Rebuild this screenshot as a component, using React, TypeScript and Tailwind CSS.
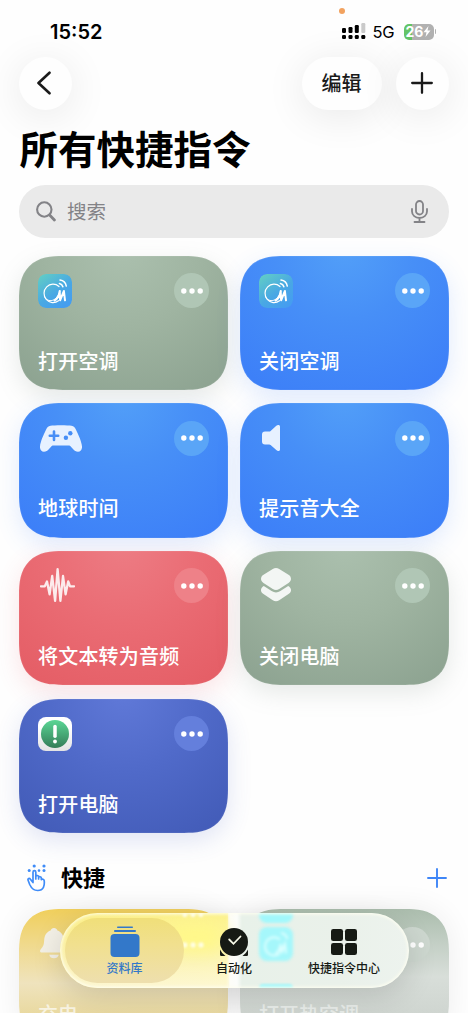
import React from 'react';

type Tone = 'sage' | 'blue' | 'red' | 'indigo';

interface Shortcut {
  title: string;
  tone: Tone;
  icon: React.ReactNode;
}

const toneStyles: Record<Tone, string> = {
  sage: 'bg-[radial-gradient(circle_at_50%_-5%,#abc0ae_0%,#9fb4a1_45%,#8ba18f_100%)] shadow-[0_8px_24px_rgba(120,140,125,0.18),inset_0_0_1px_0.5px_rgba(255,255,255,0.12)]',
  blue: 'bg-[radial-gradient(circle_at_50%_-5%,#529ff8_0%,#478ff7_40%,#3b7df8_100%)] shadow-[0_8px_24px_rgba(70,130,250,0.16),inset_0_0_1px_0.5px_rgba(255,255,255,0.12)]',
  red: 'bg-[radial-gradient(circle_at_50%_-5%,#ed7c84_0%,#ea6c74_45%,#e45c64_100%)] shadow-[0_8px_24px_rgba(230,90,100,0.16),inset_0_0_1px_0.5px_rgba(255,255,255,0.12)]',
  indigo: 'bg-[radial-gradient(circle_at_50%_-5%,#6079d8_0%,#506ac9_45%,#415ab6_100%)] shadow-[0_8px_24px_rgba(70,95,190,0.16),inset_0_0_1px_0.5px_rgba(255,255,255,0.12)]',
};

const dotStyles: Record<Tone, string> = {
  sage: 'bg-[#b0c6b5]',
  blue: 'bg-[#5aa5f7]',
  red: 'bg-[#ee8188]',
  indigo: 'bg-[#647fdc]',
};

// continuous corners where the browser knows them, plain radius otherwise
const cardShape =
  'rounded-[34px] supports-[corner-shape:squircle]:rounded-[44px] supports-[corner-shape:squircle]:[corner-shape:superellipse(1.4)]';

const MideaIcon = () => (
  <svg viewBox="0 0 34 34" className="size-[34px] rounded-[8px]">
    <defs>
      <linearGradient id="midea" x1="0" y1="0" x2="0.75" y2="1">
        <stop offset="0" stopColor="#63d0c3" />
        <stop offset="0.6" stopColor="#49a8e4" />
        <stop offset="1" stopColor="#459df0" />
      </linearGradient>
    </defs>
    <rect width="34" height="34" rx="8" fill="url(#midea)" />
    <g fill="none" stroke="#fff" strokeLinecap="round">
      <path d="M21 12.500a9 9.200 0 1 0-.5 14.200" strokeWidth="1.200" />
      <path d="M7 24c5 5.500 12 2.500 15-7" strokeWidth="1" />
      <path d="M16.500 26.500c2.800-1.500 4.600-5 5.200-9.500l.4 9.300 3.800-9.300 1.100 9.300" strokeWidth="2" strokeLinejoin="round" />
      <path d="M21.400 9.600a4.500 4.500 0 0 1 3.500 3.200M22 6.100a7.500 7.500 0 0 1 6.300 6" strokeWidth="1.500" />
    </g>
  </svg>
);

const GamepadIcon = () => (
  <svg viewBox="0 0 42 27" className="size-full">
    <path
      fill="#e7f1ff"
      d="M10.500.8C14 0 28 0 31.500.8c2.300.5 3.400 1.600 4.600 4.300C38.500 10 41.700 17 42 21.500c.2 3.200-1.400 5.200-4 5.200-2 0-3.500-.8-5-2.700l-2.300-2.600c-.6-.7-1-.8-2-.8H13.300c-1 0-1.400.1-2 .8L9 24c-1.500 1.900-3 2.700-5 2.700-2.600 0-4.200-2-4-5.200C.3 17 3.500 10 5.900 5.100 7.100 2.400 8.200 1.300 10.500.8Z"
    />
    <path d="M14 6.500v8.400M9.800 10.700h8.400" stroke="#478ef6" strokeWidth="2.600" strokeLinecap="round" />
    <circle cx="30.300" cy="8.300" r="2.200" fill="#478ef6" />
    <circle cx="25.900" cy="12.700" r="2.200" fill="#478ef6" />
  </svg>
);

const SpeakerIcon = () => (
  <svg viewBox="0 0 18 26" className="size-full">
    <path
      fill="#e7f1ff"
      d="M3 6.600h4.200c.6 0 1-.2 1.400-.6L14.300.800C15.200 0 16 0 16.800.1c.8.200 1.200.700 1.200 1.500v22.800c0 .8-.4 1.400-1.200 1.500-.8.100-1.600 0-2.500-.8L8.600 20c-.4-.4-.8-.6-1.400-.6H3c-2 0-3-1-3-3V9.600c0-2 1-3 3-3Z"
    />
  </svg>
);

const WaveIcon = () => (
  <svg viewBox="0 0 35 34" className="size-full">
    <path
      d="M1 18.300h3.800L7 13.500l2.600 12.800L12.200 8l2.900 24.800L17.600 1.200l2.800 31.600L23 8l2.600 18.300 2.600-12.800 1.900 4.800H34"
      fill="none"
      stroke="#fcebec"
      strokeWidth="2.300"
      strokeLinecap="round"
      strokeLinejoin="round"
    />
  </svg>
);

const LayersIcon = () => (
  <svg viewBox="0 0 30 34" className="size-full">
    <path
      fill="#f3f6f4"
      d="M11.800 1.100c2.200-1.400 4.200-1.400 6.400 0l9.300 5.600c3.300 2.100 3.300 6.100 0 8.200l-9.300 6c-2.200 1.400-4.200 1.400-6.400 0l-9.300-6c-3.300-2.100-3.300-6.100 0-8.200Z"
    />
    <path
      fill="#f3f6f4"
      d="M2.800 18l7.800 5c3 1.900 5.800 1.900 8.800 0l7.800-5c3.600 2.100 3.800 6 .3 8.100l-9.300 6.200c-2.200 1.400-4.200 1.400-6.400 0l-9.300-6.200c-3.500-2.100-3.300-6 .3-8.100Z"
    />
  </svg>
);

const AlertIcon = () => (
  <svg viewBox="0 0 34 34" className="size-[34px]">
    <defs>
      <linearGradient id="alert" x1="0" y1="0" x2="0" y2="1">
        <stop offset="0" stopColor="#5bd695" />
        <stop offset="1" stopColor="#347d58" />
      </linearGradient>
      <linearGradient id="alertBg" x1="0" y1="0" x2="0" y2="1">
        <stop offset="0.300" stopColor="#fff" />
        <stop offset="1" stopColor="#e3e3e3" />
      </linearGradient>
    </defs>
    <rect width="34" height="34" rx="8" fill="url(#alertBg)" />
    <circle cx="17" cy="17" r="14" fill="url(#alert)" />
    <path d="M17 9.600v9.600" stroke="#fff" strokeWidth="3.500" strokeLinecap="round" />
    <circle cx="17" cy="24.500" r="1.900" fill="#fff" />
  </svg>
);

const BellIcon = () => (
  <svg viewBox="0 0 28 31" className="size-full" fill="#f3f0e6">
    <path d="M14 0c1.700 0 3 1 3.400 2.600C21.500 4 23.500 7.500 23.800 12c.3 5 1 6.500 3.200 9 1.800 2 .9 3.600-1 3.600H2c-1.900 0-2.800-1.600-1-3.600 2.200-2.500 2.900-4 3.200-9 .3-4.500 2.300-8 6.400-9.400C11 1 12.300 0 14 0Z" />
    <path d="M9.200 26.700h9.600c-.6 2.300-2.300 3.600-4.800 3.600s-4.200-1.300-4.800-3.600Z" />
  </svg>
);

const TapIcon = () => (
  <svg viewBox="0 0 20 28" className="h-[28px] w-[20px]">
    <g fill="#3f8cf8">
      <circle cx="7.200" cy="2" r="1.600" />
      <circle cx="17" cy="2" r="1.600" />
      <circle cx="2.200" cy="6.600" r="1.500" />
      <circle cx="12" cy="6.600" r="1.300" />
      <circle cx="17" cy="6.600" r="1.500" />
    </g>
    <path
      d="M6 18.500V8.200c0-2 2.800-2 2.800 0V15v-2.700c.7-1.200 2.500-1 2.800.4V15v-1.700c.8-1 2.400-.7 2.700.5v1.800c.9-1 2.700-.4 2.900 1.100.5 4.800-.4 9.800-6.500 9.800-4.600 0-6.400-2.500-8-6L1.100 16.200c-.6-1.700 1.300-2.500 2.300-1L6 18.500Z"
      fill="none"
      stroke="#3f8cf8"
      strokeWidth="1.700"
      strokeLinejoin="round"
      strokeLinecap="round"
    />
  </svg>
);

const MoreButton: React.FC<{ className: string }> = ({ className }) => (
  <button className={`flex size-[35px] items-center justify-center rounded-full ${className}`}>
    <svg viewBox="0 0 22 6" className="h-[6px] w-[22px]" fill="#fff">
      <circle cx="2.800" cy="3" r="2.700" />
      <circle cx="11" cy="3" r="2.700" />
      <circle cx="19.200" cy="3" r="2.700" />
    </svg>
  </button>
);

const ShortcutCard: React.FC<{ shortcut: Shortcut }> = ({ shortcut }) => (
  <div className={`flex h-[134.500px] flex-col justify-between pt-[17.500px] pr-[19px] pb-[14.500px] pl-[19px] ${cardShape} ${toneStyles[shortcut.tone]}`}>
    <div className="flex items-start justify-between">
      {shortcut.icon}
      <MoreButton className={dotStyles[shortcut.tone]} />
    </div>
    <p className="text-[20px] leading-[30px] font-medium tracking-[0.200px] text-white">{shortcut.title}</p>
  </div>
);

const shortcuts: Shortcut[] = [
  { title: '打开空调', tone: 'sage', icon: <div className="pt-[1px]"><MideaIcon /></div> },
  { title: '关闭空调', tone: 'blue', icon: <div className="pt-[1px]"><MideaIcon /></div> },
  { title: '地球时间', tone: 'blue', icon: <div className="mt-[4px] ml-[2px] h-[27px] w-[42px]"><GamepadIcon /></div> },
  { title: '提示音大全', tone: 'blue', icon: <div className="mt-[4px] ml-[3px] h-[26px] w-[18px]"><SpeakerIcon /></div> },
  { title: '将文本转为音频', tone: 'red', icon: <div className="ml-[2px] h-[34px] w-[35px]"><WaveIcon /></div> },
  { title: '关闭电脑', tone: 'sage', icon: <div className="ml-[2px] h-[34px] w-[30px]"><LayersIcon /></div> },
  { title: '打开电脑', tone: 'indigo', icon: <div className="pt-[1px]"><AlertIcon /></div> },
];

const StatusBar = () => (
  <div className="flex h-[57px] items-start justify-between pt-[20px] pr-[32px] pl-[50px]">
    <span className="pt-[1px] font-[Inter] text-[20px] leading-[23px] font-semibold">15:52</span>
    <div className="flex h-[23px] items-center">
      <svg viewBox="0 0 24 17" className="h-[17px] w-[24px]">
        <rect x="0" y="5" width="4" height="5" rx="1.200" />
        <rect x="6.500" y="4" width="4" height="6" rx="1.200" />
        <rect x="12.800" y="2" width="4" height="8" rx="1.200" />
        <rect x="19.300" y="0" width="4" height="10" rx="1.200" fill="#cacaca" />
        <rect x="0" y="12" width="4" height="4" rx="1.300" />
        <rect x="6.500" y="12" width="4" height="4" rx="1.300" />
        <rect x="12.800" y="12" width="4" height="4" rx="1.300" />
        <rect x="19.300" y="12" width="4" height="4" rx="1.300" />
      </svg>
      <span className="ml-[7px] w-[22px] pt-[1px] font-[Inter] text-[16.500px] tracking-[-0.300px]">5G</span>
      <div className="ml-[9px] flex h-[16px] w-[30px] items-center justify-center rounded-[5px] bg-[linear-gradient(90deg,#64c466_26%,#b1b1b1_26%)]">
        <span className="font-[Inter] text-[14px] leading-none font-bold text-white">26</span>
        <svg viewBox="0 0 8 11" className="h-[11px] w-[8px]" fill="#fff">
          <path d="M5.500 0 0.500 6.200h3L2.500 11l5-6.400h-3Z" />
        </svg>
      </div>
      <span className="ml-[1px] h-[5px] w-[1.500px] rounded-r-full bg-[#b1b1b1]" />
    </div>
  </div>
);

const glassButton =
  'flex h-[53px] items-center justify-center rounded-full bg-[#fefefe] shadow-[0_6px_42px_rgba(0,0,0,0.09)]';

const Header = () => (
  <div className="flex justify-between px-[19px]">
    <button className={`${glassButton} w-[53px] pb-[1px]`}>
      <svg viewBox="0 0 14 24" className="mr-[3px] h-[24px] w-[14px]">
        <path d="M12.500 1.700 1.500 12l11 10.300" fill="none" stroke="#1a1a1a" strokeWidth="2.600" strokeLinecap="round" strokeLinejoin="round" />
      </svg>
    </button>
    <div className="flex gap-[14px]">
      <button className={`${glassButton} w-[80px] pr-[1px] pb-[1px] text-[20px] font-medium text-[#1a1a1a]`}>编辑</button>
      <button className={`${glassButton} w-[53px] pr-[1px] pb-[1px]`}>
        <svg viewBox="0 0 22 22" className="size-[22px]">
          <path d="M11 1.200v19.600M1.200 11h19.600" stroke="#1a1a1a" strokeWidth="2.300" strokeLinecap="round" />
        </svg>
      </button>
    </div>
  </div>
);

const SearchBar = () => (
  <div className="mx-[19px] mt-[11px] flex h-[52.500px] items-center rounded-full bg-[#eaeaea] pr-[21px] pl-[17px]">
    <svg viewBox="0 0 20 21" className="h-[21px] w-[20px]" fill="none" stroke="#838387" strokeLinecap="round">
      <circle cx="8.300" cy="8.500" r="7.200" strokeWidth="2.100" />
      <path d="m13.600 14 4.800 5" strokeWidth="2.800" />
    </svg>
    <span className="ml-[11px] flex-1 pb-[1px] text-[19.500px] text-[#838387]">搜索</span>
    <svg viewBox="0 0 17 23" className="h-[23px] w-[17px]" fill="none" stroke="#838387" strokeLinecap="round">
      <rect x="5" y="1" width="7" height="13.500" rx="3.500" strokeWidth="1.800" />
      <path d="M1 9v2.500a7.500 6.500 0 0 0 15 0V9M8.500 18v4M3.500 22h10" strokeWidth="1.800" />
    </svg>
  </div>
);

const TabBar = () => (
  <nav className="absolute top-[913px] left-[60px] flex h-[74.500px] w-[349px] overflow-hidden rounded-full bg-[linear-gradient(90deg,#f8edaa_0px,#faf3b4_166px,#fdfdf8_170px,#fcfdfb_177px,#e8f1e9_182px,#eaf1ea_280px,#edf3ee_349px)] shadow-[0_8px_30px_rgba(0,0,0,0.14)]">
    {/* colours of the cards refracted by the glass */}
    <div className="absolute top-0 left-0 h-full w-[168px] bg-[linear-gradient(180deg,rgba(255,240,100,0.5)_0%,rgba(255,246,165,0.35)_50%,rgba(255,250,225,0.7)_100%)]" />
    <div className="absolute top-[10px] left-[105px] h-[28px] w-[60px] rounded-full bg-[#fff888] blur-[9px]" />
    <div className="absolute top-[-24px] left-[199px] size-[34px] rounded-[8px] bg-[#a1f8fc] blur-[1.500px]" />
    <div className="absolute top-[14px] left-[199px] flex size-[34px] items-center justify-center rounded-[8px] bg-[#a5f7fb] blur-[1.500px]">
      <svg viewBox="0 0 34 34" className="size-full" fill="none" stroke="#dfffff" strokeWidth="2">
        <path d="M21 12.500a9 9.200 0 1 0-.5 14.200M16.500 26.500c2.800-1.500 4.600-5 5.200-9.500l.4 9.300 3.800-9.300 1.100 9.300M22 6.100a7.500 7.500 0 0 1 6.300 6" />
      </svg>
    </div>
    <div className="absolute top-[71px] left-[199px] h-[8px] w-[34px] rounded bg-[#9df8fc] blur-[1px]" />
    <svg viewBox="0 0 22 36" className="absolute top-0 left-[122px] h-[36px] w-[22px] blur-[1px]" fill="#fffde0">
      <circle cx="2.800" cy="2" r="2.300" />
      <circle cx="11" cy="2" r="2.300" />
      <circle cx="19" cy="2" r="2.300" />
      <circle cx="2.800" cy="32" r="2.700" />
      <circle cx="11" cy="32" r="2.700" />
      <circle cx="19" cy="32" r="2.700" />
    </svg>
    <div className="absolute inset-0 rounded-full shadow-[inset_0_0_3px_1.500px_rgba(255,255,240,0.8)]" />
    <div className="relative flex w-full items-center pl-[5px]">
      <div className="flex h-[65px] w-[119px] flex-col items-center rounded-full bg-[linear-gradient(180deg,#f0df79_0%,#f1e08e_40%,#eedfae_100%)] pt-[8px]">
        <svg viewBox="0 0 30 32" className="h-[32px] w-[30px]" fill="#3378c9">
          <rect x="7" y="0.500" width="16" height="1.500" rx="0.700" />
          <rect x="4" y="4" width="22" height="2" rx="0.900" />
          <rect x="0.500" y="8" width="29" height="23" rx="4" />
        </svg>
        <span className="mt-[1px] text-[12px] leading-[17px] font-medium text-[#3378c9]">资料库</span>
      </div>
      <div className="ml-[25px] flex h-[65px] w-[50px] flex-col items-center pt-[8px]">
        <svg viewBox="0 0 28 32" className="h-[32px] w-[28px]" fill="#161a14">
          <circle cx="14" cy="16" r="14" />
          <path d="M0 23.500a16 16 0 0 0 5.500 6.500H1.200Q0 30 0 28.800ZM28 23.500a16 16 0 0 1-5.500 6.500h4.300q1.200 0 1.200-1.200Z" />
          <path d="m9.200 13.500 4.300 4.300 7-7.300" fill="none" stroke="#f7f9e8" strokeWidth="1.800" strokeLinecap="round" />
        </svg>
        <span className="mt-[1px] text-[12px] leading-[17px] font-medium whitespace-nowrap text-[#161a14]">自动化</span>
      </div>
      <div className="ml-[45px] flex h-[65px] w-[80px] flex-col items-center pt-[8px]">
        <svg viewBox="0 0 26 32" className="h-[32px] w-[26px]" fill="#161a14">
          <rect x="0" y="3" width="12" height="12" rx="2.300" />
          <rect x="14" y="3" width="12" height="12" rx="2.300" />
          <rect x="0" y="17" width="12" height="12" rx="2.300" />
          <rect x="14" y="17" width="12" height="12" rx="2.300" />
        </svg>
        <span className="mt-[1px] text-[12px] leading-[17px] font-medium whitespace-nowrap text-[#161a14]">快捷指令中心</span>
      </div>
    </div>
  </nav>
);

export default function App() {
  return (
    <div className="relative h-[1013px] w-[468px] overflow-hidden bg-[#fefefe] font-['Noto_Sans_CJK_SC',sans-serif] text-black">
      <span className="absolute top-[8px] left-[339px] size-[6px] rounded-full bg-[#f2a25f]" />
      <StatusBar />
      <Header />
      <h1 className="mt-[10px] ml-[19.500px] h-[54px] text-[38.500px] leading-[54px] font-bold">所有快捷指令</h1>
      <SearchBar />

      <div className="mx-[19px] mt-[18px] grid grid-cols-2 gap-x-[12px] gap-y-[13.200px]">
        {shortcuts.map((item) => (
          <ShortcutCard key={item.title} shortcut={item} />
        ))}
      </div>

      <div className="mt-[28.500px] flex h-[32px] items-center justify-between pr-[21px] pl-[27px]">
        <div className="flex items-center gap-[14px]">
          <TapIcon />
          <h2 className="pb-[3px] text-[22px] leading-[32px] font-bold">快捷</h2>
        </div>
        <svg viewBox="0 0 20 20" className="size-[20px]">
          <path d="M10 1v18M1 10h18" stroke="#3f86f7" strokeWidth="1.900" strokeLinecap="round" />
        </svg>
      </div>

      <div className="mx-[19px] mt-[15.500px] grid grid-cols-2 gap-x-[12px]">
        <div className={`flex h-[134.500px] flex-col justify-between bg-[linear-gradient(180deg,#f0cf5c_0%,#f0d98a_25%,#efe3bd_55%,#e9d9a0_78%)] px-[19px] pt-[18px] pb-[15px] shadow-[0_0_30px_rgba(0,0,0,0.07)] ${cardShape}`}>
          <div className="flex items-start justify-between">
            <div className="mt-[1px] ml-[2px] h-[31px] w-[28px]"><BellIcon /></div>
            <MoreButton className="bg-[#f5dc80]" />
          </div>
          <p className="text-[20px] leading-[30px] font-medium text-[#f8f3e2]">充电</p>
        </div>
        <div className={`flex h-[134.500px] flex-col justify-between bg-[linear-gradient(180deg,#abbdad_0%,#c3cfc5_25%,#d8ded9_50%,#cfd5d0_78%)] px-[19px] pt-[18px] pb-[15px] shadow-[0_0_30px_rgba(0,0,0,0.07)] ${cardShape}`}>
          <div className="flex items-start justify-between">
            <div className="opacity-40"><MideaIcon /></div>
            <MoreButton className="bg-[#cdd7cf]" />
          </div>
          <p className="text-[20px] leading-[30px] font-medium text-[#e9edea]">打开热空调</p>
        </div>
      </div>

      <TabBar />
    </div>
  );
}
